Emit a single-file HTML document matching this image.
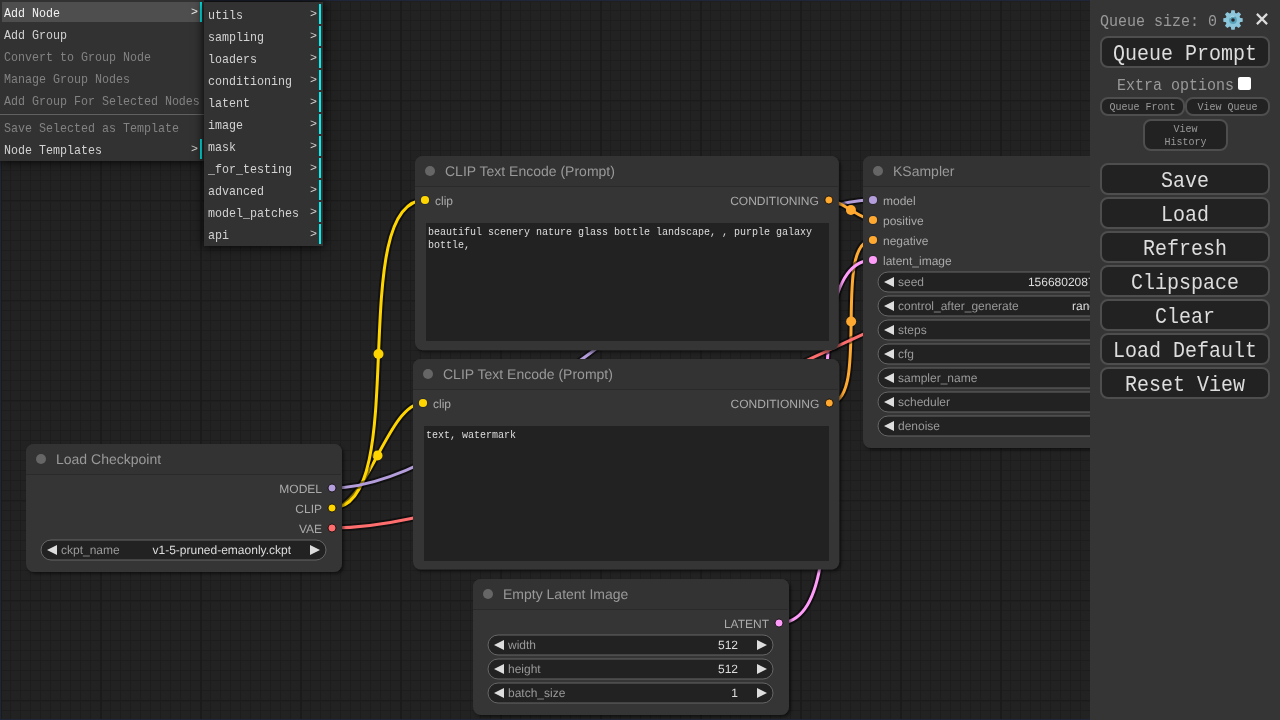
<!DOCTYPE html>
<html><head><meta charset="utf-8"><style>
html,body{margin:0;padding:0;width:1280px;height:720px;overflow:hidden;background:#222;}
#grid{position:absolute;left:0;top:0;width:1280px;height:720px;
background-image:
 linear-gradient(to right, #1b1b1b 0, #1b1b1b 2px, transparent 2px),
 linear-gradient(to bottom, #1b1b1b 0, #1b1b1b 1px, #1f1f1f 1px, #1f1f1f 2px, transparent 2px),
 linear-gradient(to right, #1d1d1d 0, #1d1d1d 1px, transparent 1px),
 linear-gradient(to bottom, #1d1d1d 0, #1d1d1d 1px, transparent 1px);
background-size:100px 100px,100px 100px,10px 10px,10px 10px;}
.ol{position:absolute;background:#1f2639;}
svg{position:absolute;left:0;top:0;will-change:transform;text-rendering:geometricPrecision;}
.tt{font-family:"Liberation Sans",sans-serif;font-size:14px;fill:#999;}
.sl{font-family:"Liberation Sans",sans-serif;font-size:12px;fill:#AAA;}
.wl{font-family:"Liberation Sans",sans-serif;font-size:12px;fill:#999;}
.wv{font-family:"Liberation Sans",sans-serif;font-size:12px;fill:#DDD;}
.ta{will-change:transform;position:absolute;box-sizing:border-box;background:#222;color:#ddd;padding:3px 2px 1px 2px;font-family:"Liberation Mono",monospace;font-size:10px;line-height:13px;white-space:pre-wrap;word-wrap:break-word;overflow:hidden;}
.cm{will-change:transform;position:absolute;background:#323232;box-shadow:0 0 10px #000;padding:0;font-family:"Liberation Mono",monospace;font-size:11.67px;display:flow-root;}
.me{margin:2px;padding:4px 2px 0 2px;height:16px;line-height:16px;color:#d2d2d2;white-space:nowrap;position:relative;}
.me.sub{padding-right:20px;border-right:2px solid #00f2f2;}
.me.sub::after{content:">";position:absolute;top:2px;right:2px;}
.me.dis{color:#828282;}
.t15{display:inline-block;transform:scaleY(1.09);transform-origin:0 12.5px;}
.t20{display:inline-block;transform:scaleY(1.12);transform-origin:0 19.33px;}
.tx{display:inline-block;transform:scaleY(1.15);transform-origin:0 11.1px;}
.me.hover{background:#4e4e4e;color:#f2f2f2;}
.sep{border-top:1px solid #303030;border-bottom:1px solid #616161;height:0;margin:3px 0 2px 0;}
#panel{will-change:transform;position:absolute;left:1090px;top:0;width:190px;height:720px;background:#353535;font-family:"Liberation Mono",monospace;}
.pt{position:absolute;color:#999;font-size:15px;white-space:nowrap;}
.bb{position:absolute;box-sizing:border-box;background:#222;border:2px solid #4e4e4e;border-radius:8px;color:#ddd;font-size:20px;text-align:center;white-space:nowrap;}
.sb{position:absolute;box-sizing:border-box;background:#222;border:2px solid #4e4e4e;border-radius:8px;color:#999;font-size:10px;text-align:center;line-height:13px;}
</style></head><body>
<div id="grid"></div>
<div class="ol" style="left:0;top:0;width:1280px;height:1px"></div>
<div class="ol" style="left:0;top:0;width:1px;height:720px"></div>
<div class="ol" style="left:0;top:719px;width:1280px;height:1px"></div>
<svg width="1280" height="720" viewBox="0 0 1280 720">
<defs><filter id="sh" x="-5%" y="-5%" width="110%" height="110%"><feDropShadow dx="2" dy="2" stdDeviation="1.5" flood-color="#000" flood-opacity="0.5"/></filter><clipPath id="cp_ks"><rect x="863" y="156" width="316" height="292" rx="8"/></clipPath><clipPath id="cp_lat"><rect x="473" y="579" width="316" height="136" rx="8"/></clipPath><clipPath id="cp_pos"><rect x="415" y="156" width="423.85" height="194.31" rx="8"/></clipPath><clipPath id="cp_neg"><rect x="413" y="359" width="426.28" height="210.61" rx="8"/></clipPath><clipPath id="cp_ckpt"><rect x="26" y="444" width="316" height="128" rx="8"/></clipPath></defs>
<path d="M332 508C366.74 508 388.26 403 423 403" stroke="rgba(0,0,0,0.5)" stroke-width="7" fill="none" stroke-linejoin="round"/>
<path d="M332 508C366.74 508 388.26 403 423 403" stroke="#FFD500" stroke-width="3" fill="none"/>
<circle cx="377.5" cy="455.5" r="5" fill="#FFD500"/>
<path d="M332 508C412.43 508 344.57 200 425 200" stroke="rgba(0,0,0,0.5)" stroke-width="7" fill="none" stroke-linejoin="round"/>
<path d="M332 508C412.43 508 344.57 200 425 200" stroke="#FFD500" stroke-width="3" fill="none"/>
<circle cx="378.5" cy="354" r="5" fill="#FFD500"/>
<path d="M332 488C485.22 488 719.78 200 873 200" stroke="rgba(0,0,0,0.5)" stroke-width="7" fill="none" stroke-linejoin="round"/>
<path d="M332 488C485.22 488 719.78 200 873 200" stroke="#B39DDB" stroke-width="3" fill="none"/>
<circle cx="602.5" cy="344" r="5" fill="#B39DDB"/>
<path d="M828.85 200C840.97 200 860.88 220 873 220" stroke="rgba(0,0,0,0.5)" stroke-width="7" fill="none" stroke-linejoin="round"/>
<path d="M828.85 200C840.97 200 860.88 220 873 220" stroke="#FFA931" stroke-width="3" fill="none"/>
<circle cx="850.92" cy="210" r="5" fill="#FFA931"/>
<path d="M829.28 403C871.47 403 830.81 240 873 240" stroke="rgba(0,0,0,0.5)" stroke-width="7" fill="none" stroke-linejoin="round"/>
<path d="M829.28 403C871.47 403 830.81 240 873 240" stroke="#FFA931" stroke-width="3" fill="none"/>
<circle cx="851.14" cy="321.5" r="5" fill="#FFA931"/>
<path d="M779 623C872.74 623 779.26 260 873 260" stroke="rgba(0,0,0,0.5)" stroke-width="7" fill="none" stroke-linejoin="round"/>
<path d="M779 623C872.74 623 779.26 260 873 260" stroke="#FF9CF9" stroke-width="3" fill="none"/>
<circle cx="826" cy="441.5" r="5" fill="#FF9CF9"/>
<path d="M1169 200C1181.51 200 1206.49 202 1219 202" stroke="rgba(0,0,0,0.5)" stroke-width="7" fill="none" stroke-linejoin="round"/>
<path d="M1169 200C1181.51 200 1206.49 202 1219 202" stroke="#FF9CF9" stroke-width="3" fill="none"/>
<circle cx="1194" cy="201" r="5" fill="#FF9CF9"/>
<path d="M332 528C566.57 528 984.43 222 1219 222" stroke="rgba(0,0,0,0.5)" stroke-width="7" fill="none" stroke-linejoin="round"/>
<path d="M332 528C566.57 528 984.43 222 1219 222" stroke="#FF6E6E" stroke-width="3" fill="none"/>
<circle cx="775.5" cy="375" r="5" fill="#FF6E6E"/>
<rect x="863" y="156" width="316" height="292" rx="8" fill="#353535" filter="url(#sh)"/>
<path d="M863 156 h316 v30 h-316 z" fill="#333" clip-path="url(#cp_ks)"/>
<rect x="863" y="186" width="315" height="1" fill="rgba(0,0,0,0.2)"/>
<circle cx="878" cy="171" r="5" fill="#666"/>
<text x="893" y="176" class="tt">KSampler</text>
<circle cx="873" cy="200" r="4.6" fill="none" stroke="rgba(10,20,40,0.25)" stroke-width="1"/>
<circle cx="873" cy="200" r="4.1" fill="#B39DDB"/>
<text x="883" y="205" class="sl">model</text>
<circle cx="873" cy="220" r="4.6" fill="none" stroke="rgba(10,20,40,0.25)" stroke-width="1"/>
<circle cx="873" cy="220" r="4.1" fill="#FFA931"/>
<text x="883" y="225" class="sl">positive</text>
<circle cx="873" cy="240" r="4.6" fill="none" stroke="rgba(10,20,40,0.25)" stroke-width="1"/>
<circle cx="873" cy="240" r="4.1" fill="#FFA931"/>
<text x="883" y="245" class="sl">negative</text>
<circle cx="873" cy="260" r="4.6" fill="none" stroke="rgba(10,20,40,0.25)" stroke-width="1"/>
<circle cx="873" cy="260" r="4.1" fill="#FF9CF9"/>
<text x="883" y="265" class="sl">latent_image</text>
<circle cx="1169" cy="200" r="4" fill="#FF9CF9" stroke="rgba(0,0,0,0.75)" stroke-width="1"/>
<text x="1159" y="205" class="sl" text-anchor="end">LATENT</text>
<rect x="878" y="272" width="285" height="20" rx="10" fill="#222" stroke="#666" stroke-width="1"/>
<path d="M894 277L884 282L894 287z" fill="#DDD"/>
<path d="M1147 277L1157 282L1147 287z" fill="#DDD"/>
<text x="898" y="286" class="wl">seed</text>
<text x="1128" y="286" class="wv" text-anchor="end">156680208700286</text>
<rect x="878" y="296" width="285" height="20" rx="10" fill="#222" stroke="#666" stroke-width="1"/>
<path d="M894 301L884 306L894 311z" fill="#DDD"/>
<path d="M1147 301L1157 306L1147 311z" fill="#DDD"/>
<text x="898" y="310" class="wl">control_after_generate</text>
<text x="1128" y="310" class="wv" text-anchor="end">randomize</text>
<rect x="878" y="320" width="285" height="20" rx="10" fill="#222" stroke="#666" stroke-width="1"/>
<path d="M894 325L884 330L894 335z" fill="#DDD"/>
<path d="M1147 325L1157 330L1147 335z" fill="#DDD"/>
<text x="898" y="334" class="wl">steps</text>
<text x="1128" y="334" class="wv" text-anchor="end">20</text>
<rect x="878" y="344" width="285" height="20" rx="10" fill="#222" stroke="#666" stroke-width="1"/>
<path d="M894 349L884 354L894 359z" fill="#DDD"/>
<path d="M1147 349L1157 354L1147 359z" fill="#DDD"/>
<text x="898" y="358" class="wl">cfg</text>
<text x="1128" y="358" class="wv" text-anchor="end">8.0</text>
<rect x="878" y="368" width="285" height="20" rx="10" fill="#222" stroke="#666" stroke-width="1"/>
<path d="M894 373L884 378L894 383z" fill="#DDD"/>
<path d="M1147 373L1157 378L1147 383z" fill="#DDD"/>
<text x="898" y="382" class="wl">sampler_name</text>
<text x="1128" y="382" class="wv" text-anchor="end">euler</text>
<rect x="878" y="392" width="285" height="20" rx="10" fill="#222" stroke="#666" stroke-width="1"/>
<path d="M894 397L884 402L894 407z" fill="#DDD"/>
<path d="M1147 397L1157 402L1147 407z" fill="#DDD"/>
<text x="898" y="406" class="wl">scheduler</text>
<text x="1128" y="406" class="wv" text-anchor="end">normal</text>
<rect x="878" y="416" width="285" height="20" rx="10" fill="#222" stroke="#666" stroke-width="1"/>
<path d="M894 421L884 426L894 431z" fill="#DDD"/>
<path d="M1147 421L1157 426L1147 431z" fill="#DDD"/>
<text x="898" y="430" class="wl">denoise</text>
<text x="1128" y="430" class="wv" text-anchor="end">1.00</text>
<rect x="473" y="579" width="316" height="136" rx="8" fill="#353535" filter="url(#sh)"/>
<path d="M473 579 h316 v30 h-316 z" fill="#333" clip-path="url(#cp_lat)"/>
<rect x="473" y="609" width="315" height="1" fill="rgba(0,0,0,0.2)"/>
<circle cx="488" cy="594" r="5" fill="#666"/>
<text x="503" y="599" class="tt">Empty Latent Image</text>
<circle cx="779" cy="623" r="4" fill="#FF9CF9" stroke="rgba(0,0,0,0.75)" stroke-width="1"/>
<text x="769" y="628" class="sl" text-anchor="end">LATENT</text>
<rect x="488" y="635" width="285" height="20" rx="10" fill="#222" stroke="#666" stroke-width="1"/>
<path d="M504 640L494 645L504 650z" fill="#DDD"/>
<path d="M757 640L767 645L757 650z" fill="#DDD"/>
<text x="508" y="649" class="wl">width</text>
<text x="738" y="649" class="wv" text-anchor="end">512</text>
<rect x="488" y="659" width="285" height="20" rx="10" fill="#222" stroke="#666" stroke-width="1"/>
<path d="M504 664L494 669L504 674z" fill="#DDD"/>
<path d="M757 664L767 669L757 674z" fill="#DDD"/>
<text x="508" y="673" class="wl">height</text>
<text x="738" y="673" class="wv" text-anchor="end">512</text>
<rect x="488" y="683" width="285" height="20" rx="10" fill="#222" stroke="#666" stroke-width="1"/>
<path d="M504 688L494 693L504 698z" fill="#DDD"/>
<path d="M757 688L767 693L757 698z" fill="#DDD"/>
<text x="508" y="697" class="wl">batch_size</text>
<text x="738" y="697" class="wv" text-anchor="end">1</text>
<rect x="415" y="156" width="423.85" height="194.31" rx="8" fill="#353535" filter="url(#sh)"/>
<path d="M415 156 h423.85 v30 h-423.85 z" fill="#333" clip-path="url(#cp_pos)"/>
<rect x="415" y="186" width="422.85" height="1" fill="rgba(0,0,0,0.2)"/>
<circle cx="430" cy="171" r="5" fill="#666"/>
<text x="445" y="176" class="tt">CLIP Text Encode (Prompt)</text>
<circle cx="425" cy="200" r="4.6" fill="none" stroke="rgba(10,20,40,0.25)" stroke-width="1"/>
<circle cx="425" cy="200" r="4.1" fill="#FFD500"/>
<text x="435" y="205" class="sl">clip</text>
<circle cx="828.85" cy="200" r="4" fill="#FFA931" stroke="rgba(0,0,0,0.75)" stroke-width="1"/>
<text x="818.85" y="205" class="sl" text-anchor="end">CONDITIONING</text>
<rect x="413" y="359" width="426.28" height="210.61" rx="8" fill="#353535" filter="url(#sh)"/>
<path d="M413 359 h426.28 v30 h-426.28 z" fill="#333" clip-path="url(#cp_neg)"/>
<rect x="413" y="389" width="425.28" height="1" fill="rgba(0,0,0,0.2)"/>
<circle cx="428" cy="374" r="5" fill="#666"/>
<text x="443" y="379" class="tt">CLIP Text Encode (Prompt)</text>
<circle cx="423" cy="403" r="4.6" fill="none" stroke="rgba(10,20,40,0.25)" stroke-width="1"/>
<circle cx="423" cy="403" r="4.1" fill="#FFD500"/>
<text x="433" y="408" class="sl">clip</text>
<circle cx="829.28" cy="403" r="4" fill="#FFA931" stroke="rgba(0,0,0,0.75)" stroke-width="1"/>
<text x="819.28" y="408" class="sl" text-anchor="end">CONDITIONING</text>
<rect x="26" y="444" width="316" height="128" rx="8" fill="#353535" filter="url(#sh)"/>
<path d="M26 444 h316 v30 h-316 z" fill="#333" clip-path="url(#cp_ckpt)"/>
<rect x="26" y="474" width="315" height="1" fill="rgba(0,0,0,0.2)"/>
<circle cx="41" cy="459" r="5" fill="#666"/>
<text x="56" y="464" class="tt">Load Checkpoint</text>
<circle cx="332" cy="488" r="4" fill="#B39DDB" stroke="rgba(0,0,0,0.75)" stroke-width="1"/>
<text x="322" y="493" class="sl" text-anchor="end">MODEL</text>
<circle cx="332" cy="508" r="4" fill="#FFD500" stroke="rgba(0,0,0,0.75)" stroke-width="1"/>
<text x="322" y="513" class="sl" text-anchor="end">CLIP</text>
<circle cx="332" cy="528" r="4" fill="#FF6E6E" stroke="rgba(0,0,0,0.75)" stroke-width="1"/>
<text x="322" y="533" class="sl" text-anchor="end">VAE</text>
<rect x="41" y="540" width="285" height="20" rx="10" fill="#222" stroke="#666" stroke-width="1"/>
<path d="M57 545L47 550L57 555z" fill="#DDD"/>
<path d="M310 545L320 550L310 555z" fill="#DDD"/>
<text x="61" y="554" class="wl">ckpt_name</text>
<text x="291" y="554" class="wv" text-anchor="end">v1-5-pruned-emaonly.ckpt</text>
</svg>
<div class="ta" style="left:426px;top:223px;width:402.85px;height:118px">beautiful scenery nature glass bottle landscape, , purple galaxy bottle,</div>
<div class="ta" style="left:424px;top:426px;width:405.28px;height:135px">text, watermark</div>
<div class="cm" style="left:0px;top:0px;width:204px"><div class="me hover sub"><span class="tx">Add Node</span></div><div class="me "><span class="tx">Add Group</span></div><div class="me dis"><span class="tx">Convert to Group Node</span></div><div class="me dis"><span class="tx">Manage Group Nodes</span></div><div class="me dis"><span class="tx">Add Group For Selected Nodes</span></div><div class="sep"></div><div class="me dis"><span class="tx">Save Selected as Template</span></div><div class="me sub"><span class="tx">Node Templates</span></div></div>
<div class="cm" style="left:204px;top:2px;width:119px"><div class="me sub"><span class="tx">utils</span></div><div class="me sub"><span class="tx">sampling</span></div><div class="me sub"><span class="tx">loaders</span></div><div class="me sub"><span class="tx">conditioning</span></div><div class="me sub"><span class="tx">latent</span></div><div class="me sub"><span class="tx">image</span></div><div class="me sub"><span class="tx">mask</span></div><div class="me sub"><span class="tx">_for_testing</span></div><div class="me sub"><span class="tx">advanced</span></div><div class="me sub"><span class="tx">model_patches</span></div><div class="me sub"><span class="tx">api</span></div></div>
<div id="panel">
 <div class="pt" style="left:10px;top:14px;"><span class="t15">Queue size: 0</span></div>
 <svg width="22" height="22" viewBox="-11 -11 22 22" style="left:131.5px;top:9px;position:absolute">
  <circle r="7.3" fill="#8cc6da"/>
  <path d="M-2.20 -6.60 L-1.70 -9.70 L1.70 -9.70 L2.20 -6.60 L3.11 -6.22 L5.66 -8.06 L8.06 -5.66 L6.22 -3.11 L6.60 -2.20 L9.70 -1.70 L9.70 1.70 L6.60 2.20 L6.22 3.11 L8.06 5.66 L5.66 8.06 L3.11 6.22 L2.20 6.60 L1.70 9.70 L-1.70 9.70 L-2.20 6.60 L-3.11 6.22 L-5.66 8.06 L-8.06 5.66 L-6.22 3.11 L-6.60 2.20 L-9.70 1.70 L-9.70 -1.70 L-6.60 -2.20 L-6.22 -3.11 L-8.06 -5.66 L-5.66 -8.06 L-3.11 -6.22Z" fill="#8cc6da"/>
  <circle r="3.9" fill="#5aa3ba"/>
  <path d="M-3.2 -2.2 A3.9 3.9 0 0 1 1.5 -3.6" stroke="#b8e2ee" stroke-width="1" fill="none"/>
  <circle r="1.8" fill="#2a2a2a"/>
 </svg>
 <svg width="14" height="14" viewBox="0 0 14 14" style="left:165px;top:12px;position:absolute">
  <path d="M1.9 1.9L12.1 12.1M12.1 1.9L1.9 12.1" stroke="#ddd" stroke-width="2.2"/>
 </svg>
 <div class="bb" style="left:10px;top:36px;width:170px;height:32px;line-height:28px;padding-top:3px;"><span class="t20">Queue Prompt</span></div>
 <div class="pt" style="left:27px;top:78px;"><span class="t15">Extra options</span></div>
 <div style="position:absolute;left:148px;top:77px;width:13px;height:13px;background:#fff;border-radius:2px;"></div>
 <div class="sb" style="left:10px;top:97px;width:85px;height:19px;line-height:15px;padding-top:1px;">Queue Front</div>
 <div class="sb" style="left:95px;top:97px;width:85px;height:19px;line-height:15px;padding-top:1px;">View Queue</div>
 <div class="sb" style="left:53px;top:119px;width:85px;height:32px;padding-top:2px;">View<br>History</div>
 <div class="bb" style="left:10px;top:163px;width:170px;height:32px;line-height:28px;padding-top:3px;"><span class="t20">Save</span></div>
 <div class="bb" style="left:10px;top:197px;width:170px;height:32px;line-height:28px;padding-top:3px;"><span class="t20">Load</span></div>
 <div class="bb" style="left:10px;top:231px;width:170px;height:32px;line-height:28px;padding-top:3px;"><span class="t20">Refresh</span></div>
 <div class="bb" style="left:10px;top:265px;width:170px;height:32px;line-height:28px;padding-top:3px;"><span class="t20">Clipspace</span></div>
 <div class="bb" style="left:10px;top:299px;width:170px;height:32px;line-height:28px;padding-top:3px;"><span class="t20">Clear</span></div>
 <div class="bb" style="left:10px;top:333px;width:170px;height:32px;line-height:28px;padding-top:3px;"><span class="t20">Load Default</span></div>
 <div class="bb" style="left:10px;top:367px;width:170px;height:32px;line-height:28px;padding-top:3px;"><span class="t20">Reset View</span></div>
</div>
</body></html>
